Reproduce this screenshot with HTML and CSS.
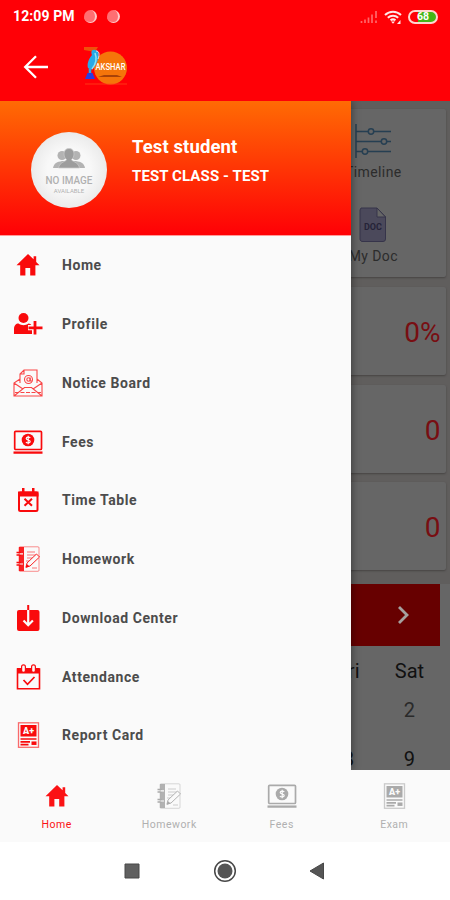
FILE: index.html
```
<!DOCTYPE html>
<html lang="en">
<head>
  <meta charset="UTF-8" />
  <meta name="viewport" content="width=device-width, initial-scale=1.0"/>
  <title>Akshar Student</title>
  <link rel="stylesheet" href="styles.css">
</head>
<body>

  <!-- shared icons -->
  <svg class="sprite" width="0" height="0">
    <symbol id="i-home" viewBox="0 0 30 30">
      <path fill="currentColor" d="M15 4 3.5 15.2h3.7V25.5h5.2v-7.6h4.8v7.6h5.2V15.2h4.1l-3.3-3.3V6.3h-2.6v2.9z"/>
    </symbol>
    <symbol id="i-profile" viewBox="0 0 30 30">
      <circle cx="10.5" cy="9" r="5" fill="currentColor"/>
      <path fill="currentColor" d="M1 25v-5c0-3.5 2-5.5 4.500-5.500 3 2.200 7 2.200 10 0 1.500.1 2.300.8 2.800 1.600h-3.300v5.200h4V25z"/>
      <path stroke="currentColor" stroke-width="2.800" d="M22 12v13.500M15.500 18.800h14"/>
    </symbol>
    <symbol id="i-notice" viewBox="0 0 30 30">
      <g fill="none" stroke="currentColor" stroke-width="1.100" opacity=".75">
        <path d="M7 15V6l4-4h13v13M7 6h4V2M7 11l-6 4v13h28V15l-5-4M1 15l9 6M29 15l-9 6M1 28l10.500-8.500h7L29 28"/>
        <path d="M2 24.500h26" stroke-dasharray="4 1.500"/>
        <circle cx="15.500" cy="11.500" r="4"/>
        <circle cx="15.500" cy="11.500" r="1.700"/>
        <path d="M17.200 9.500v3.500h2"/>
      </g>
    </symbol>
    <symbol id="i-fees" viewBox="0 0 30 30">
      <rect x="1.700" y="4.300" width="26.800" height="18.200" rx="1" fill="none" stroke="currentColor" stroke-width="1.700"/>
      <path stroke="currentColor" stroke-width="2.300" d="M.5 25.600h29"/>
      <circle cx="15" cy="13" r="6.300" fill="currentColor"/>
      <path class="cut" d="M17.200 11c-.5-1-4-1.300-4 .6 0 1.800 4 1 4 2.900 0 1.800-3.600 1.700-4.200.4M15.200 8.800v8.400"/>
    </symbol>
    <symbol id="i-time" viewBox="0 0 30 30">
      <rect x="6" y="7.500" width="18.500" height="18.500" rx="1.500" fill="none" stroke="currentColor" stroke-width="2"/>
      <path fill="currentColor" d="M5 6.500h20.500v5H5zM9 3h2.500v4H9zM19 3h2.500v4H19z"/>
      <path stroke="currentColor" stroke-width="2" d="m11.500 13.800 7.500 7M19 13.800l-7.500 7"/>
    </symbol>
    <symbol id="i-homework" viewBox="0 0 30 30">
      <rect x="6" y="2.800" width="20" height="24.500" rx="1" fill="none" stroke="currentColor" stroke-width=".9" opacity=".5"/>
      <path fill="currentColor" d="M6 3h5v24H6z" opacity=".9"/>
      <path stroke="currentColor" stroke-width="1.600" d="M3.500 8.500H8M3.500 11H8M3.500 18.500H8M3.500 21H8"/>
      <path class="gap" d="M6.500 9.800H10M6.500 20H10"/>
      <path stroke="currentColor" opacity=".55" d="M14 8h8M14 11h9M14 14h6M13 17h4M19 24h5"/>
      <path class="pencil" d="m13 23 1-4 9.500-9 3 3-9.500 9z"/>
      <path fill="currentColor" d="m12.500 24 1.300-4 2.800 2.600z"/>
    </symbol>
    <symbol id="i-download" viewBox="0 0 30 30">
      <rect x="4" y="7" width="22.500" height="21" rx="2" fill="currentColor"/>
      <path class="arrow" d="M15.200 6.500v15.500M10.500 17.500l4.700 4.700 4.700-4.700"/>
      <path stroke="currentColor" stroke-width="2" d="M15.200 2v5"/>
    </symbol>
    <symbol id="i-attend" viewBox="0 0 30 30">
      <path fill="none" stroke="currentColor" stroke-width="1.600" d="M4.500 7h22v19.800h-22z"/>
      <path fill="currentColor" d="M4 6h22.500v5.500H4z"/>
      <g fill="#fafafa" stroke="currentColor" stroke-width="1.200">
        <rect x="8.600" y="2.800" width="3.800" height="7.500" rx="1.900"/>
        <rect x="18.600" y="2.800" width="3.800" height="7.500" rx="1.900"/>
      </g>
      <path fill="none" stroke="currentColor" stroke-width="1.700" d="m10.500 18 4 4.300 7-7.300"/>
    </symbol>
    <symbol id="i-report" viewBox="0 0 30 30">
      <rect x="5.500" y="2.800" width="20" height="24.500" fill="none" stroke="currentColor" stroke-width="1.300" opacity=".6"/>
      <path fill="currentColor" d="M7.500 5h16v11.500h-16z"/>
      <path stroke="currentColor" stroke-width="1.700" d="M7.500 19h16M7.500 21.800h9.500M7.500 24.600h8"/>
      <path stroke="currentColor" stroke-width="3.500" d="M18.500 23.200h5"/>
    </symbol>
  </svg>

  <header>
    <div class="status-bar">
      <span class="clock">12:09 PM</span>
      <i class="dot"></i>
      <i class="dot"></i>
      <div class="status-icons">
        <svg class="signal" width="18" height="14" viewBox="0 0 18 14">
          <path stroke="#fff" stroke-width="1.700" d="M1.500 13v-2M5 13V9.500M8.500 13V7.500M12 13V4.500M16 13v-2.500M16 8V1"/>
        </svg>
        <svg width="18" height="14" viewBox="0 0 18 14" fill="none" stroke="#ffe8e8" stroke-width="2">
          <path d="M1 5c4.500-4.300 11.500-4.300 16 0M3.800 7.800c3-2.700 7.400-2.700 10.400 0M6.500 10.300c1.600-1.200 3.400-1.200 5 0"/>
          <path fill="#ffe8e8" stroke="none" d="m9 13.800-2-2.300h4zM16.500 10v4h-3.500z"/>
        </svg>
        <span class="battery">68</span>
      </div>
    </div>
    <div class="app-bar">
      <svg width="26" height="24" viewBox="0 0 26 24" fill="none" stroke="#fff" stroke-width="2.300">
        <path d="M25 12H2.500M13 1.200 2.200 12 13 22.800"/>
      </svg>
      <svg class="logo" width="46" height="40" viewBox="0 0 46 40">
        <path d="M1 0h14l-3 5-11-2z" fill="#f0510a"/>
        <circle cx="27.500" cy="21" r="16.500" fill="#f5750a"/>
        <path d="M15 30h24l-5-2H21z" fill="#a84208"/>
        <path d="M12 3c-4-1-4 3-3 5-4 5-5 9-4 13l3 2c5-4 9-11 7-19z" fill="#28a9e8"/>
        <path d="M12 6c2 5 1 11-3 16" stroke="#8fe3f5" stroke-width="1.500" fill="none"/>
        <path d="M7 22v5" stroke="#28a9e8" stroke-width="2.500"/>
        <path d="M4.500 26h5l2.500 6H2z" fill="#2a3ce0"/>
        <path d="M13 4c3 0 4 3 2 8" stroke="#d7e8f0" fill="none"/>
        <path d="M2 37h42" stroke="#ff4a1c" stroke-width="2" opacity=".35"/>
        <text x="12.500" y="22.500" textLength="30" lengthAdjust="spacingAndGlyphs">AKSHAR</text>
      </svg>
    </div>
  </header>

  <main>
    <section class="dashboard">
      <div class="card shortcuts">
        <div class="shortcut">
          <svg width="38" height="36" viewBox="0 0 38 36" fill="none" stroke="#263f52" stroke-width="1.500">
            <path d="M2 1v34M2 8.500h35M2 18.500h35M2 28.500h35"/>
            <g fill="#656565"><circle cx="17" cy="8.500" r="2.700"/><circle cx="30" cy="18.500" r="2.700"/><circle cx="11" cy="28.500" r="2.700"/></g>
          </svg>
          <span>Timeline</span>
        </div>
        <div class="shortcut">
          <svg width="28" height="36" viewBox="0 0 28 36">
            <path d="M2 1h16l8.500 9v22a2.500 2.500 0 0 1-2.500 2.500H4A2.500 2.500 0 0 1 1 32V3z" fill="#4b495b" stroke="#36344a"/>
            <path d="M18 1v9h8.500z" fill="#666" stroke="#36344a"/>
            <text class="doc" x="14" y="23">DOC</text>
          </svg>
          <span>My Doc</span>
        </div>
      </div>
      <div class="card count">0%</div>
      <div class="card count">0</div>
      <div class="card count">0</div>
      <div class="calendar">
        <div class="month">
          <svg width="14" height="20" viewBox="0 0 14 20" fill="none" stroke="#a5a09f" stroke-width="2.800"><path d="m2 2 8 8-8 8"/></svg>
        </div>
        <div class="week"><span class="fri">Fri</span><span>Sat</span></div>
        <div class="week dim"><span class="sat">2</span></div>
        <div class="week"><span class="fri">8</span><span>9</span></div>
      </div>
    </section>

    <aside class="drawer">
      <div class="user">
        <div class="avatar">
          <svg width="32" height="21" viewBox="0 0 32 21">
            <g fill="#b3b3b3"><circle cx="9" cy="7.500" r="4.500"/><circle cx="23" cy="7.500" r="4.500"/><path d="M0 20c1-5 4-6 9-7h14c5 1 8 2 9 7z"/></g>
            <path d="M16 .5c3 0 5 2 5 5.500 0 3-1.500 4.500-2.500 5.500 0 2 7 2.500 8 8.500h-21c1-6 8-6.500 8-8.500-1-1-2.500-2.500-2.500-5.500 0-3.500 2-5.500 5-5.500z" fill="#9d9d9d" stroke="#ccc" stroke-width=".7"/>
          </svg>
          <b>NO IMAGE</b>
          <small>AVAILABLE</small>
        </div>
        <div class="info">
          <strong>Test student</strong>
          <span>TEST CLASS - TEST</span>
        </div>
      </div>
      <nav class="menu">
        <a><svg><use href="#i-home"/></svg>Home</a>
        <a><svg><use href="#i-profile"/></svg>Profile</a>
        <a><svg><use href="#i-notice"/></svg>Notice Board</a>
        <a><svg><use href="#i-fees"/></svg>Fees</a>
        <a><svg><use href="#i-time"/></svg>Time Table</a>
        <a><svg><use href="#i-homework"/></svg>Homework</a>
        <a><svg><use href="#i-download"/></svg>Download Center</a>
        <a><svg><use href="#i-attend"/></svg>Attendance</a>
        <a><svg><use href="#i-report"/><text x="15.500" y="13.700" class="grade">A+</text></svg>Report Card</a>
      </nav>
    </aside>
  </main>

  <nav class="tabs">
    <a class="active"><svg><use href="#i-home"/></svg>Home</a>
    <a><svg><use href="#i-homework"/></svg>Homework</a>
    <a><svg><use href="#i-fees"/></svg>Fees</a>
    <a><svg><use href="#i-report"/><text x="15.500" y="13.700" class="grade">A+</text></svg>Exam</a>
  </nav>

  <footer class="system-nav">
    <svg width="16" height="16"><path fill="#606060" stroke="#484848" d="M1 1h14v14H1z"/></svg>
    <svg width="24" height="24" viewBox="0 0 24 24"><circle cx="12" cy="12" r="10.300" fill="none" stroke="#484848" stroke-width="1.500"/><circle cx="12" cy="12" r="7.500" fill="#555"/></svg>
    <svg width="16" height="18"><path fill="#555" stroke="#484848" d="M1 9 14.500 1v16z"/></svg>
  </footer>

</body>
</html>
```
FILE: styles.css
```
* {
  box-sizing: border-box;
}

body {
  margin: 0;
  width: 450px;
  height: 900px;
  display: flex;
  flex-direction: column;
  overflow: hidden;
  background: #fff;
  font-family: Roboto, sans-serif;
}

svg {
  display: block;
  flex: none;
}

.sprite {
  display: none;
}

/* Top bars */
header {
  height: 101px;
  background: #ff0006;
  color: #fff;
}

.status-bar {
  height: 33px;
  padding: 0 12px 0 13px;
  display: flex;
  align-items: center;
}

.clock {
  width: 62px;
  margin-right: 9px;
  font-size: 14px;
  font-weight: 700;
  line-height: 33px;
  letter-spacing: .1px;
  white-space: nowrap;
}

.dot {
  width: 13px;
  height: 13px;
  margin-right: 9.500px;
  border-radius: 50%;
  background: #ff6e72;
  border-right: 2px solid #ffc9c9;
  border-bottom: 1px solid #ffc9c9;
}

.status-icons {
  margin-left: auto;
  display: flex;
  align-items: center;
  gap: 6px;
}

.signal {
  opacity: .4;
}

.battery {
  width: 30px;
  height: 14px;
  border: 2px solid #ffd5cf;
  border-radius: 7px;
  background: linear-gradient(to right, #ff0006 30%, #45b516 30%);
  font-size: 10.500px;
  font-weight: 700;
  line-height: 10px;
  text-align: center;
}

.app-bar {
  height: 68px;
  padding: 0 0 1px 23px;
  display: flex;
  align-items: center;
  gap: 34px;
}

.logo text {
  font-size: 9px;
  font-weight: 500;
  fill: #fff;
}

/* Dashboard, dimmed while the drawer is open */
main {
  position: relative;
  height: 669px;
  overflow: hidden;
  background: #605e5d;
}

.dashboard {
  padding: 8px 4px 0;
}

.card {
  height: 88px;
  margin-bottom: 9.800px;
  border-radius: 2px;
  background: #666;
  box-shadow: 0 1px 2px #474543;
}

.shortcuts {
  height: 168px;
  padding-top: 14px;
  display: grid;
  grid-template-columns: repeat(3, 1fr);
  grid-auto-rows: 84px;
}

.shortcut {
  grid-column: 3;
  padding-left: 2px;
  display: flex;
  flex-direction: column;
  align-items: center;
  gap: 3px;
  font-size: 14px;
  line-height: 20px;
  letter-spacing: .4px;
  color: #2c2c2c;
}

.doc {
  font-size: 9px;
  font-weight: 700;
  letter-spacing: 0;
  text-anchor: middle;
  fill: #252338;
}

.count {
  padding-right: 5.500px;
  font-size: 28px;
  line-height: 91px;
  text-align: right;
  color: #780e12;
}

.calendar {
  height: 200px;
  margin: 14px -4px 0;
  padding: 0 10px;
  background: #666;
}

.month {
  height: 62px;
  padding-right: 29px;
  display: flex;
  align-items: center;
  justify-content: flex-end;
  background: #670000;
}

.week {
  height: 50px;
  display: grid;
  grid-template-columns: repeat(7, 1fr);
  padding-left: 2px;
  font-size: 20px;
  line-height: 50px;
  text-align: center;
  color: #111;
}

.week.dim {
  height: 49px;
  line-height: 28px;
  color: #2a2a2a;
}

.week:last-child {
  line-height: 29px;
}

.fri {
  grid-column: 6;
}

.sat {
  grid-column: 7;
}

/* Drawer */
.drawer {
  position: absolute;
  top: 0;
  left: 0;
  width: 350.500px;
  height: 669px;
  background: #fafafa;
  box-shadow: 1px 0 8px rgba(0, 0, 0, .4);
}

.user {
  height: 134.500px;
  padding: 4px 0 0 31px;
  display: flex;
  align-items: center;
  gap: 25px;
  background: linear-gradient(#ff6b04, #ff0006);
  border-bottom: 1px solid #ff9a98;
  color: #fff;
}

.avatar {
  width: 76px;
  height: 76px;
  padding-top: 16px;
  border-radius: 50%;
  background: radial-gradient(#f8f8f8 40%, #dedede);
  display: flex;
  flex-direction: column;
  align-items: center;
  color: #b0b0b0;
}

.avatar b {
  margin-top: 6px;
  font-size: 11px;
  font-weight: 500;
  line-height: 12px;
  transform: scaleX(.9);
  white-space: nowrap;
}

.avatar small {
  font-size: 6px;
  line-height: 8px;
}

.info {
  display: flex;
  flex-direction: column;
  gap: 8px;
  padding-bottom: 17px;
}

.info strong {
  font-size: 18.500px;
  line-height: 22px;
  letter-spacing: .1px;
}

.info span {
  font-size: 15px;
  font-weight: 700;
  line-height: 20px;
  letter-spacing: .1px;
}

.menu a {
  height: 58.750px;
  padding: 1px 0 0 13px;
  display: flex;
  align-items: center;
  gap: 19px;
  font-size: 14px;
  font-weight: 700;
  letter-spacing: .57px;
  color: #4c4c4c;
}

.menu svg,
.tabs svg {
  width: 30px;
  height: 30px;
  color: #f90a0c;
}

.cut,
.gap {
  fill: none;
  stroke: #fafafa;
  stroke-width: 1.200;
}

.arrow {
  fill: none;
  stroke: #fafafa;
  stroke-width: 2.200;
}

.pencil {
  fill: #fafafa;
  stroke: currentColor;
  stroke-width: .9;
}

.grade {
  font-size: 9px;
  font-weight: 900;
  letter-spacing: 0;
  text-anchor: middle;
  fill: #fafafa;
}

/* Bottom bars */
.tabs {
  height: 72px;
  padding-top: 11px;
  display: grid;
  grid-template-columns: repeat(4, 1fr);
  background: #fafafa;
}

.tabs a {
  display: flex;
  flex-direction: column;
  align-items: center;
  gap: 6px;
  padding-left: 1px;
  font-size: 10.500px;
  line-height: 15px;
  letter-spacing: .5px;
  color: #b0b0b0;
}

.tabs svg {
  color: #aaa;
}

.tabs .active,
.tabs .active svg {
  color: #fb1214;
}

.system-nav {
  height: 58px;
  padding: 0 125px 0 124px;
  display: flex;
  align-items: center;
  justify-content: space-between;
}
```
